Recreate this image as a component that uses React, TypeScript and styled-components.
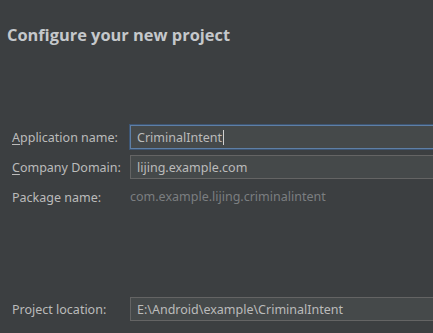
import React from 'react';
import styled, { createGlobalStyle } from 'styled-components';

const GlobalStyle = createGlobalStyle`
  html, body {
    margin: 0;
    padding: 0;
    background: #3c3f41;
    overflow: hidden;
  }
  body {
    font-family: "Noto Sans", "Open Sans", sans-serif;
  }
`;

const Page = styled.div`
  width: 433px;
  height: 333px;
  background: #3c3f41;
  box-sizing: border-box;
  padding-top: 24px;
  display: flex;
  flex-direction: column;
  overflow: hidden;
`;

const Title = styled.h1`
  margin: 0 0 0 7px;
  font-family: "Open Sans", "Noto Sans", sans-serif;
  font-weight: 700;
  font-size: 16.4px;
  line-height: 22px;
  color: #c5c8cb;
`;

const Form = styled.div<{ $top: number }>`
  display: grid;
  grid-template-columns: 118px 1fr;
  row-gap: 6px;
  align-items: center;
  padding-left: 12px;
  margin-top: ${(p) => p.$top}px;
  margin-right: -20px;
`;

const Label = styled.label`
  font-size: 12.5px;
  color: #bbbbbb;
  white-space: nowrap;

  u {
    text-decoration: underline;
    text-underline-offset: 2px;
  }
`;

const Field = styled.div<{ $focused?: boolean }>`
  height: 24px;
  box-sizing: border-box;
  display: flex;
  align-items: center;
  padding-left: 6px;
  font-size: 12.5px;
  color: #bbbbbb;
  background: #45494a;
  border: 1px solid ${(p) => (p.$focused ? '#5e7fa6' : '#646464')};
  box-shadow: ${(p) => (p.$focused ? '0 0 0 1px #3d5573' : 'none')};
  white-space: nowrap;
`;

const Caret = styled.span`
  display: inline-block;
  width: 1px;
  height: 15px;
  background: #d0d0d0;
  margin-left: 1px;
`;

const Value = styled.span`
  font-size: 12.5px;
  color: #7b7e80;
  height: 24px;
  line-height: 24px;
  white-space: nowrap;
`;

export default function App() {
  return (
    <Page>
      <GlobalStyle />
      <Title>Configure your new project</Title>
      <Form $top={79}>
        <Label>
          <u>A</u>pplication name:
        </Label>
        <Field $focused>
          CriminalIntent
          <Caret />
        </Field>
        <Label>
          <u>C</u>ompany Domain:
        </Label>
        <Field>lijing.example.com</Field>
        <Label>Package name:</Label>
        <Value>com.example.lijing.criminalintent</Value>
      </Form>
      <Form $top={88}>
        <Label>Project location:</Label>
        <Field>E:\Android\example\CriminalIntent</Field>
      </Form>
    </Page>
  );
}
